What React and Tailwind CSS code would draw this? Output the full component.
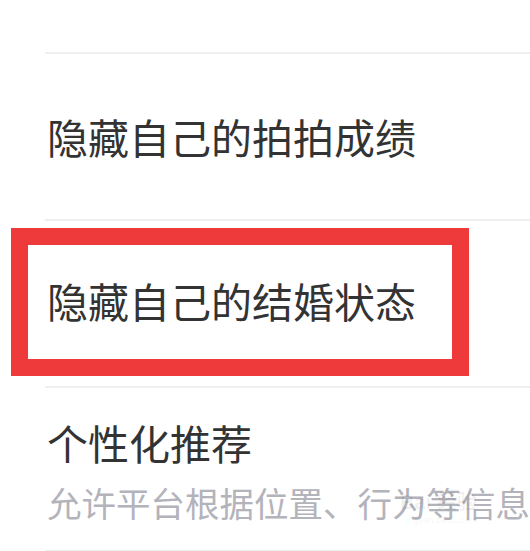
export default function App() {
  const font = { fontFamily: '"Noto Sans CJK SC", "Noto Sans", sans-serif' };
  return (
    <div className="w-[530px] h-[551px] bg-white overflow-hidden" style={font}>
      <div className="h-[52px]" />
      <div className="ml-[45px] h-[2px] bg-[#efefef]" />
      <div className="h-[165px] flex items-center pl-[47px]">
        <span className="text-[41px] leading-none text-[#333333]">隐藏自己的拍拍成绩</span>
      </div>
      <div className="ml-[45px] h-[2px] bg-[#efefef]" />
      <div className="relative h-[165px] flex items-center pl-[47px]">
        <span className="text-[41px] leading-none text-[#333333] pb-[6px]">隐藏自己的结婚状态</span>
        <div className="absolute left-[11px] top-[7px] w-[458px] h-[148px] border-[17px] border-[#ee3a3b]" />
      </div>
      <div className="ml-[45px] h-[2px] bg-[#efefef]" />
      <div className="relative h-[162px] pl-[47px] pt-[34px] whitespace-nowrap">
        <div className="text-[41px] leading-none text-[#333333]">个性化推荐</div>
        <div className="mt-[22px] text-[34.5px] leading-none text-[#b3b3bb]">允许平台根据位置、行为等信息</div>
        <div className="absolute left-[400px] top-[104px] text-[20px] font-bold leading-none text-[#000000]/[0.06]" style={{ fontFamily: '"Liberation Sans", "Noto Sans CJK SC", sans-serif' }}>Bai 经验</div>
        <div className="absolute left-[405px] top-[128px] text-[9px] leading-none text-[#000000]/[0.06]" style={{ fontFamily: '"Liberation Sans", sans-serif' }}>jingyan.baidu.com</div>
      </div>
      <div className="ml-[45px] h-[2px] bg-[#efefef]" />
    </div>
  );
}
